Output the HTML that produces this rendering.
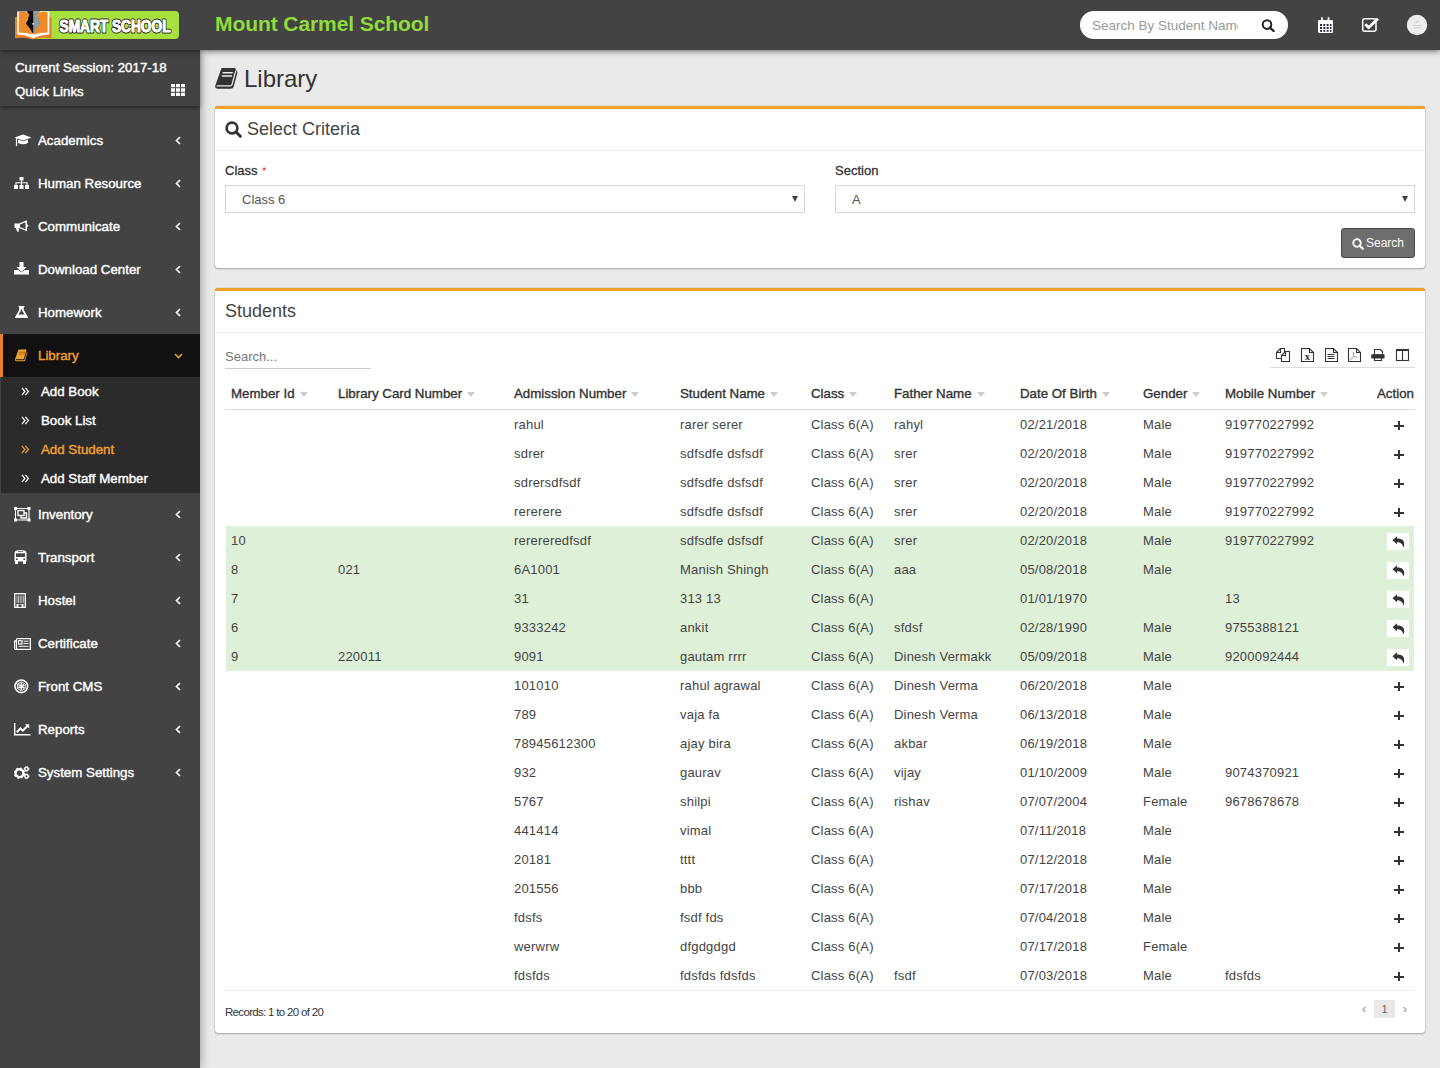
<!DOCTYPE html>
<html><head><meta charset="utf-8">
<style>
*{box-sizing:border-box;margin:0;padding:0}
html,body{width:1440px;height:1068px;overflow:hidden}
body{background:#eaeaea;font-family:"Liberation Sans",sans-serif;color:#444;position:relative}
.a{position:absolute}
svg{display:block}
#hdr{left:0;top:0;width:1440px;height:50px;background:#434343;z-index:5;box-shadow:0 1px 6px rgba(0,0,0,.6)}
#side{left:0;top:50px;width:200px;height:1018px;background:#434343;z-index:4;box-shadow:1px 0 9px rgba(0,0,0,.34)}
.school{left:215px;top:9px;font-size:21px;font-weight:bold;color:#90dc3c;letter-spacing:-.08px;line-height:30px}
.srch{left:1080px;top:11px;width:208px;height:28px;border-radius:14px;background:#fff}
.srch span{position:absolute;left:12px;top:1px;line-height:28px;font-size:13.5px;color:#999;white-space:nowrap;width:146px;overflow:hidden}
.sess{left:0;top:0;width:200px;height:56px;box-shadow:0 2px 4px rgba(0,0,0,.35);background:#434343;z-index:2}
.sess div{position:absolute;left:15px;color:#fff;font-weight:normal;font-size:13.3px;-webkit-text-stroke:.4px #fff;line-height:16px}
.menu{left:0;top:69px;width:200px}
.mi{position:relative;height:43px;line-height:43px;color:#fff;font-weight:normal;font-size:13.3px;-webkit-text-stroke:.4px currentColor;padding-left:38px}
.mi svg{position:absolute}
.mi .chev{position:absolute;left:175px;top:17px}
.mi.act{background:#111;color:#f0a030;border-left:3px solid #e8802a;padding-left:35px}
.mi.act .chev{left:171px;top:19px}
.sub{background:#2b2b2b;height:116px;margin-left:1px}
.sub div{position:relative;height:29px;line-height:29px;color:#fff;font-weight:normal;font-size:13.3px;-webkit-text-stroke:.4px currentColor;padding-left:40px}
.sub div.on{color:#f0a030}
.sub div svg{position:absolute;left:20px;top:10px}
.title{left:244px;top:63px;font-size:24px;line-height:32px;color:#333}
.box{position:absolute;left:215px;width:1210px;background:#fff;border-top:3px solid #f4a128;border-radius:3px;box-shadow:0 1px 2px rgba(0,0,0,.28),0 0 1px rgba(0,0,0,.4)}
.bh{position:absolute;left:0;top:0;width:100%;height:42px;border-bottom:1px solid #f0f0f0}
.bh .t{position:absolute;top:6px;font-size:18px;line-height:28px;color:#444}
.lbl{position:absolute;font-size:13px;font-weight:normal;-webkit-text-stroke:.3px #333;color:#333;line-height:16px}
.sel{position:absolute;height:28px;border:1px solid #d2d6de;background:#fff;font-size:13px;color:#555;line-height:27px;padding-left:16px}
.sel:after{content:"";position:absolute;right:6px;top:10px;border-left:3px solid transparent;border-right:3px solid transparent;border-top:6px solid #444}
.btn{position:absolute;background:#6e6e6e;border:1px solid #444;border-radius:3px;color:#fff;font-size:12px;line-height:29px}
.th{position:absolute;left:225px;top:379px;width:1190px;height:31px;border-bottom:1px solid #ddd}
.th span{position:absolute;top:0;line-height:29px;font-size:13.3px;font-weight:normal;-webkit-text-stroke:.35px #333;color:#333;white-space:nowrap}
.arr{display:inline-block;width:0;height:0;border-left:4px solid transparent;border-right:4px solid transparent;border-top:5px solid #ccc;margin-left:5px;vertical-align:1px;-webkit-text-stroke:0}
.tb{position:absolute;left:226px;top:410px;width:1189px;height:580px}
.row{position:absolute;left:0;width:1188px;height:29px}
.row.g{background:#dff0d8}
.row span{position:absolute;top:0;line-height:29px;font-size:13px;color:#444;white-space:nowrap;letter-spacing:.2px}
.pl{position:absolute;left:1168px;top:11px;width:10px;height:9px}
.pl:before{content:"";position:absolute;left:4px;top:0;width:2px;height:9px;background:#333}
.pl:after{content:"";position:absolute;left:0;top:3.5px;width:10px;height:2px;background:#333}
.rb{position:absolute;left:1161px;top:7px;width:22px;height:17px;background:#fff}
.rb svg{position:absolute;left:5px;top:3px}
.tool svg{position:absolute;top:348px}
</style></head>
<body>
<svg width="0" height="0" style="position:absolute">
 <defs>
  <symbol id="reply" viewBox="0 0 13 12"><path d="M0.5 4.2 L5 0.3 V2.6 C9.5 2.6 12.2 4.3 12.2 8.2 C12.2 9.6 11.7 10.8 11 11.6 C11.3 8.8 9.3 6.2 5 6.2 V8.3 Z" fill="#333"/></symbol>
  <symbol id="chl" viewBox="0 0 6 9"><path d="M5 1 L1.5 4.5 L5 8" fill="none" stroke="#fff" stroke-width="1.7"/></symbol>
  <symbol id="dbl" viewBox="0 0 9 9"><path d="M0.9 0.9 L3.9 4.5 L0.9 8.1 M4.4 0.9 L7.4 4.5 L4.4 8.1" fill="none" stroke="currentColor" stroke-width="1.25"/></symbol>
 </defs>
</svg>
<div id="hdr" class="a">
  <svg class="a" style="left:14px;top:10px" width="166" height="31" viewBox="0 0 166 31">
    <rect x="18" y="1" width="147" height="28" rx="4" fill="#a8e040"/>
    <path d="M1 7.6 Q1 6.9 2 6.9 H36.6 Q37.6 6.9 37.6 7.6 V28.3 Q28 27 19.2 29.4 Q10.4 27 1 28.3 Z" fill="#eb7f22"/>
    <path d="M3.2 1.5 H35.3 V24.4 Q27 24.6 19.2 28.2 Q11.4 24.6 3.2 24.4 Z" fill="#fff"/>
    <path d="M13.3 1 H25.3 L24.6 9.5 L27 13.5 L19.2 24 L11.4 13.5 L13.9 9.5 Z" fill="#0e0e0e"/>
    <path d="M19.2 1 H25.3 L24.6 9.5 L27 13.5 L19.2 24 Z" fill="#8e9ba0"/>
    <circle cx="19.2" cy="13.8" r="0.9" fill="#fff"/>
    <path d="M4.8 2.2 Q11 1 15.6 4.2 Q14 9 11.8 13.4 Q16.5 18 18.9 24.6 Q12 22.6 4.8 22.6 Z" fill="#ef8a28"/>
    <path d="M33.6 2.2 Q27.4 1 22.8 4.2 Q24.4 9 26.6 13.4 Q21.9 18 19.5 24.6 Q26.4 22.6 33.6 22.6 Z" fill="#ef8a28"/>
    <text x="45.5" y="21.8" font-family="Liberation Sans" font-weight="bold" font-size="17" textLength="111" lengthAdjust="spacingAndGlyphs" fill="#fff" stroke="#262626" stroke-width="3" stroke-linejoin="round" paint-order="stroke">SMART SCHOOL</text><text x="45.5" y="21.8" font-family="Liberation Sans" font-weight="bold" font-size="17" textLength="111" lengthAdjust="spacingAndGlyphs" fill="#fff" stroke="#fff" stroke-width="1">SMART SCHOOL</text>
  </svg>
  <div class="a school">Mount Carmel School</div>
  <div class="a srch"><span>Search By Student Name</span>
    <svg class="a" style="left:181px;top:8px" width="15" height="13" viewBox="0 0 15 13"><circle cx="6" cy="5.6" r="4.3" fill="none" stroke="#222" stroke-width="2"/><path d="M9 8.6 L12.6 12" stroke="#222" stroke-width="2.4" stroke-linecap="round"/></svg>
  </div>
  <svg class="a" style="left:1317px;top:17px" width="17" height="17" viewBox="0 0 17 17"><rect x="1" y="3" width="15" height="13" rx="1.2" fill="#fff"/><path d="M5 1 V4.5 M11.5 1 V4.5" stroke="#fff" stroke-width="1.8" stroke-linecap="round"/><path d="M3 7h2v2H3zM6.3 7h2v2h-2zM9.6 7h2v2h-2zM12.9 7h1.6v2h-1.6zM3 10h2v2H3zM6.3 10h2v2h-2zM9.6 10h2v2h-2zM12.9 10h1.6v2h-1.6zM3 13h2v1.7H3zM6.3 13h2v1.7h-2zM9.6 13h2v1.7h-2zM12.9 13h1.6v1.7h-1.6z" fill="#2a2a40"/></svg>
  <svg class="a" style="left:1361px;top:17px" width="19" height="16" viewBox="0 0 19 16"><rect x="1.7" y="1.7" width="13.3" height="12.6" rx="2" fill="none" stroke="#fff" stroke-width="1.5"/><path d="M4.3 7.3 L7.6 10.6 L17 1.8" fill="none" stroke="#fff" stroke-width="2.8"/></svg>
  <svg class="a" style="left:1406px;top:14px" width="22" height="22" viewBox="0 0 22 22"><circle cx="11" cy="11" r="10.2" fill="#ededed"/><path d="M8.5 8.5 Q11 5.5 13.5 8.5 Z" fill="#c8c8c8"/><path d="M6.5 11.5 H15.5 M8 13.5 H14" stroke="#d0d0d0" stroke-width="0.9"/></svg>
</div>
<div id="side" class="a">
  <div class="a sess"><div style="top:10px">Current Session: 2017-18</div><div style="top:34px">Quick Links</div>
    <svg class="a" style="left:171px;top:34px" width="14" height="12" viewBox="0 0 14 12"><path d="M0 0h4v3.3H0zM5 0h4v3.3H5zM10 0h4v3.3h-4zM0 4.3h4v3.4H0zM5 4.3h4v3.4H5zM10 4.3h4v3.4h-4zM0 8.7h4V12H0zM5 8.7h4V12H5zM10 8.7h4V12h-4z" fill="#fff"/></svg>
  </div>
  <div class="a menu">
    <div class="mi"><svg style="left:14px;top:15px" width="18" height="13" viewBox="0 0 18 13"><path d="M9 0.5 L17.5 3.5 L9 6.5 L0.5 3.5 Z" fill="#fff"/><path d="M4 5.5 V9 Q9 11.5 14 9 V5.5 L9 7.3 Z" fill="#fff"/><path d="M2.5 4 V12" stroke="#fff" stroke-width="1.2"/></svg>Academics<svg class="chev" width="6" height="9"><use href="#chl"/></svg></div>
    <div class="mi"><svg style="left:14px;top:15px" width="15" height="12" viewBox="0 0 15 12"><path d="M5.5 0h4v3.5h-4zM0 8h4v4H0zM5.5 8h4v4h-4zM11 8h4v4h-4z" fill="#fff"/><path d="M7.5 3.5V8M2 8V5.8H13V8" fill="none" stroke="#fff" stroke-width="1.1"/></svg>Human Resource<svg class="chev" width="6" height="9"><use href="#chl"/></svg></div>
    <div class="mi"><svg style="left:14px;top:15px" width="15" height="12" viewBox="0 0 15 12"><path d="M0.5 3.5 H5 L13 0.3 V11.2 L5 8 H0.5 Z" fill="#fff"/><path d="M6 4.5 L11.5 2.3 V9.2 L6 7 Z" fill="#434343"/><path d="M2 8 L3 11.5 H5 L4.6 8 Z" fill="#fff"/><path d="M13 4 L14.5 5.7 L13 7.5" fill="#fff"/></svg>Communicate<svg class="chev" width="6" height="9"><use href="#chl"/></svg></div>
    <div class="mi"><svg style="left:14px;top:14px" width="15" height="13" viewBox="0 0 15 13"><path d="M5.5 0h4v5h3l-5 5-5-5h3z" fill="#fff"/><path d="M0 8h4.5l3 2.5 3-2.5H15v4.5H0z" fill="#fff"/></svg>Download Center<svg class="chev" width="6" height="9"><use href="#chl"/></svg></div>
    <div class="mi"><svg style="left:15px;top:15px" width="13" height="12" viewBox="0 0 13 12"><path d="M3.5 0.5h6M4.8 0.5v3.5L0.5 11.5h12L8.2 4V0.5" fill="#fff" stroke="#fff" stroke-width="1.1"/><path d="M5.8 3.5 L5.8 5 L3.3 8.5 H9.7 L7.2 5 V3.5 Z" fill="#434343"/></svg>Homework<svg class="chev" width="6" height="9"><use href="#chl"/></svg></div>
    <div class="mi act"><svg style="left:11px;top:15px" width="14" height="13" viewBox="0 0 24 23"><path d="M7.6 1 H20.6 Q22 1 21.7 2.5 L22.9 4.3 Q23.6 5 23.3 6.3 L19.7 19.5 Q19.1 21.8 16.7 21.8 H4 Q0.7 21.8 1.3 18.6 Z" fill="#f0a030"/><path d="M2.6 18.9 H16.4 Q17.6 18.9 18 17.6 L21.9 3.4" fill="none" stroke="#111" stroke-width="1.8"/><path d="M8.6 5.8 H18.8 M7.8 9 H18" stroke="#c07818" stroke-width="2.2"/></svg>Library<svg class="chev" width="9" height="6" viewBox="0 0 9 6"><path d="M1 1 L4.5 4.5 L8 1" fill="none" stroke="#f0a030" stroke-width="1.6"/></svg></div>
    <div class="sub"><div><svg width="9" height="9" style="color:#fff"><use href="#dbl"/></svg>Add Book</div><div><svg width="9" height="9" style="color:#fff"><use href="#dbl"/></svg>Book List</div><div class="on"><svg width="9" height="9" style="color:#f0a030"><use href="#dbl"/></svg>Add Student</div><div><svg width="9" height="9" style="color:#fff"><use href="#dbl"/></svg>Add Staff Member</div></div>
    <div class="mi"><svg style="left:14px;top:14px" width="17" height="15" viewBox="0 0 17 15"><path d="M2.5 1.5 H14 M2.5 13 H14 M1.5 2.5 V12 M15 2.5 V12" stroke="#fff" stroke-width="1.1"/><path d="M0 0h3v3H0zM13.5 0h3v3h-3zM0 11.5h3v3H0zM13.5 11.5h3v3h-3z" fill="#fff"/><rect x="4" y="3.5" width="6" height="5" fill="none" stroke="#fff" stroke-width="1.3"/><path d="M10 6 H12.5 V11 H7 V8.5" fill="none" stroke="#fff" stroke-width="1.3"/></svg>Inventory<svg class="chev" width="6" height="9"><use href="#chl"/></svg></div>
    <div class="mi"><svg style="left:14px;top:14px" width="13" height="14" viewBox="0 0 13 14"><path d="M2.5 0.5 Q6.5 -0.3 10.5 0.5 Q12.5 1.2 12.5 3.5 V11.5 H0.5 V3.5 Q0.5 1.2 2.5 0.5 Z" fill="#fff"/><path d="M2 3.3h9v3.7H2z" fill="#434343"/><path d="M4 1.5h5" stroke="#434343" stroke-width="0.7"/><circle cx="2.8" cy="9.2" r="0.9" fill="#434343"/><circle cx="10.2" cy="9.2" r="0.9" fill="#434343"/><path d="M1 11h3v3H1zM9 11h3v3H9z" fill="#fff"/></svg>Transport<svg class="chev" width="6" height="9"><use href="#chl"/></svg></div>
    <div class="mi"><svg style="left:14px;top:14px" width="12" height="15" viewBox="0 0 12 15"><rect x="0.7" y="0.7" width="10.6" height="13.6" fill="none" stroke="#fff" stroke-width="1.3"/><path d="M3 2.5V10M4.6 2.5V10M6.2 2.5V10M7.8 2.5V10M9.4 2.5V10" stroke="#ddd" stroke-width="0.8"/><path d="M2.5 11h7v3h-7z" fill="#fff"/><path d="M4.5 11.5h3v2.5h-3z" fill="#434343"/></svg>Hostel<svg class="chev" width="6" height="9"><use href="#chl"/></svg></div>
    <div class="mi"><svg style="left:14px;top:16px" width="17" height="12" viewBox="0 0 17 12"><path d="M2.5 0.7 H16.3 V11.3 H1.5 Q0.7 11.3 0.7 10.5 V3 H2.5" fill="none" stroke="#fff" stroke-width="1.3"/><path d="M2.5 1 V11" stroke="#fff" stroke-width="1"/><rect x="4.5" y="2.7" width="3.5" height="3.3" fill="none" stroke="#fff" stroke-width="1.2"/><path d="M9.5 3.2H14.5M9.5 5.5H14.5M4.5 8.3H14.5" stroke="#fff" stroke-width="1"/></svg>Certificate<svg class="chev" width="6" height="9"><use href="#chl"/></svg></div>
    <div class="mi"><svg style="left:14px;top:14px" width="15" height="15" viewBox="0 0 15 15"><circle cx="7.3" cy="7.3" r="6.3" fill="none" stroke="#fff" stroke-width="1.6"/><path d="M7.3 2.8 L11.2 5 V9.6 L7.3 11.8 L3.4 9.6 V5 Z" fill="none" stroke="#fff" stroke-width="0.9"/><path d="M7.3 3.8V10.8M4.3 5.6L10.3 9M4.3 9L10.3 5.6" stroke="#fff" stroke-width="1.6"/></svg>Front CMS<svg class="chev" width="6" height="9"><use href="#chl"/></svg></div>
    <div class="mi"><svg style="left:14px;top:15px" width="17" height="13" viewBox="0 0 17 13"><path d="M0.7 0 V11.7 H16.5" fill="none" stroke="#fff" stroke-width="1.4"/><path d="M2.8 9.2 L6.4 5.4 L8.8 7.6 L13.4 3" fill="none" stroke="#fff" stroke-width="2"/><path d="M11 1.3 H15.2 V5.5 Z" fill="#fff"/></svg>Reports<svg class="chev" width="6" height="9"><use href="#chl"/></svg></div>
    <div class="mi"><svg style="left:14px;top:15px" width="16" height="14" viewBox="0 0 16 14"><circle cx="5.4" cy="7.2" r="3.9" fill="none" stroke="#fff" stroke-width="2.4"/><circle cx="5.4" cy="7.2" r="4.9" fill="none" stroke="#fff" stroke-width="1.6" stroke-dasharray="1.9 1.95"/><circle cx="12.5" cy="3" r="1.7" fill="none" stroke="#fff" stroke-width="1.5"/><circle cx="12.5" cy="3" r="2.4" fill="none" stroke="#fff" stroke-width="1" stroke-dasharray="1 1.1"/><circle cx="12.5" cy="10.3" r="1.7" fill="none" stroke="#fff" stroke-width="1.5"/><circle cx="12.5" cy="10.3" r="2.4" fill="none" stroke="#fff" stroke-width="1" stroke-dasharray="1 1.1"/></svg>System Settings<svg class="chev" width="6" height="9"><use href="#chl"/></svg></div>
  </div>
</div>
<div class="a title">Library</div>
<svg class="a" style="left:214px;top:67px" width="24" height="23" viewBox="0 0 24 23"><path d="M7.6 1 H20.6 Q22 1 21.7 2.5 L22.9 4.3 Q23.6 5 23.3 6.3 L19.7 19.5 Q19.1 21.8 16.7 21.8 H4 Q0.7 21.8 1.3 18.6 Z" fill="#333"/><path d="M2.6 18.9 H16.4 Q17.6 18.9 18 17.6 L21.9 3.4" fill="none" stroke="#eaeaea" stroke-width="1.3"/><path d="M8.6 5.8 H18.8 M7.8 9 H18" stroke="#eaeaea" stroke-width="1.4"/></svg>
<div class="box" style="top:106px;height:162px">
  <div class="bh"><div class="t" style="left:32px">Select Criteria</div>
  <svg class="a" style="left:10px;top:12px" width="17" height="17" viewBox="0 0 17 17"><circle cx="7" cy="7" r="5.4" fill="none" stroke="#333" stroke-width="2.6"/><path d="M10.8 10.8 L15.3 15.3" stroke="#333" stroke-width="3" stroke-linecap="round"/></svg>
  </div>
</div>
<div class="lbl" style="left:225px;top:163px">Class <span style="color:#e23;font-size:10px;font-weight:normal;-webkit-text-stroke:0;vertical-align:0;margin-left:1px">*</span></div>
<div class="sel" style="left:225px;top:185px;width:580px">Class 6</div>
<div class="lbl" style="left:835px;top:163px">Section</div>
<div class="sel" style="left:835px;top:185px;width:580px">A</div>
<div class="btn" style="left:1341px;top:228px;width:74px;height:30px;padding-left:24px">Search
  <svg class="a" style="left:10px;top:9px" width="12" height="12" viewBox="0 0 12 12"><circle cx="5" cy="5" r="3.8" fill="none" stroke="#fff" stroke-width="1.8"/><path d="M7.7 7.7 L10.8 10.8" stroke="#fff" stroke-width="2.2" stroke-linecap="round"/></svg>
</div>
<div class="box" style="top:288px;height:745px">
  <div class="bh"><div class="t" style="left:10px">Students</div></div>
</div>
<div class="a" style="left:225px;top:348px;font-size:13px;color:#777;line-height:18px">Search...</div>
<div class="a" style="left:225px;top:368px;width:146px;height:1px;background:#ccc"></div>
<div class="a" style="left:1270px;top:367px;width:145px;height:1px;background:#ddd"></div>
<svg class="a" style="left:1270px;top:344px" width="145" height="22" viewBox="0 0 145 22" shape-rendering="auto">
 <g fill="#fff" stroke="#333" stroke-width="1.1" stroke-linejoin="miter">
  <path d="M6.5 8.5 L10.5 4.5 H14.5 V14.5 H6.5 Z"/><path d="M6.5 8.5 H10.5 V4.5" fill="none"/>
  <path d="M11.5 11.5 L15.5 7.5 H19.5 V17.5 H11.5 Z"/><path d="M11.5 11.5 H15.5 V7.5" fill="none"/>
  <path d="M31.5 4.5 H39.5 L43.5 8.5 V17.5 H31.5 Z"/><path d="M39.5 4.5 V8.5 H43.5" fill="none"/>
  <path d="M55.5 4.5 H63.5 L67.5 8.5 V17.5 H55.5 Z"/><path d="M63.5 4.5 V8.5 H67.5" fill="none"/>
  <path d="M57.5 10.5 H64.5 M57.5 12.5 H64.5 M57.5 14.5 H64.5" fill="none"/>
  <path d="M78.5 4.5 H86.5 L90.5 8.5 V17.5 H78.5 Z"/><path d="M86.5 4.5 V8.5 H90.5" fill="none"/>
  <path d="M104.5 5.5 H110.5 L112.5 7.5 V11 H104.5 Z"/>
  <path d="M104.5 14 V16.5 H111.5 V14" />
  <rect x="126.5" y="5.5" width="12" height="11" fill="#fff"/>
 </g>
 <text x="37.4" y="16" font-family="Liberation Serif" font-weight="bold" font-size="10.5" text-anchor="middle" fill="#333">x</text>
 <path d="M83.7 12.4 L83.5 8 M83.7 12.4 L80 15.8 M83.7 12.4 L87.6 13.4" stroke="#907890" stroke-width="0.8" fill="none"/>
 <rect x="101.2" y="10.2" width="13.4" height="4.4" rx="0.8" fill="#333"/>
 <rect x="126" y="5" width="13" height="2" fill="#333"/>
 <path d="M132.5 6 V16.5" stroke="#333" stroke-width="1.1"/>
</svg>
<div class="th">
 <span style="left:6px">Member Id<i class="arr"></i></span>
 <span style="left:113px">Library Card Number<i class="arr"></i></span>
 <span style="left:289px">Admission Number<i class="arr"></i></span>
 <span style="left:455px">Student Name<i class="arr"></i></span>
 <span style="left:586px">Class<i class="arr"></i></span>
 <span style="left:669px">Father Name<i class="arr"></i></span>
 <span style="left:795px">Date Of Birth<i class="arr"></i></span>
 <span style="left:918px">Gender<i class="arr"></i></span>
 <span style="left:1000px">Mobile Number<i class="arr"></i></span>
 <span style="left:1152px">Action</span>
</div>
<div class="tb">
<div class="row" style="top:0px"><span style="left:288px">rahul</span><span style="left:454px">rarer serer</span><span style="left:585px">Class 6(A)</span><span style="left:668px">rahyl</span><span style="left:794px">02/21/2018</span><span style="left:917px">Male</span><span style="left:999px">919770227992</span><i class="pl"></i></div>
<div class="row" style="top:29px"><span style="left:288px">sdrer</span><span style="left:454px">sdfsdfe dsfsdf</span><span style="left:585px">Class 6(A)</span><span style="left:668px">srer</span><span style="left:794px">02/20/2018</span><span style="left:917px">Male</span><span style="left:999px">919770227992</span><i class="pl"></i></div>
<div class="row" style="top:58px"><span style="left:288px">sdrersdfsdf</span><span style="left:454px">sdfsdfe dsfsdf</span><span style="left:585px">Class 6(A)</span><span style="left:668px">srer</span><span style="left:794px">02/20/2018</span><span style="left:917px">Male</span><span style="left:999px">919770227992</span><i class="pl"></i></div>
<div class="row" style="top:87px"><span style="left:288px">rererere</span><span style="left:454px">sdfsdfe dsfsdf</span><span style="left:585px">Class 6(A)</span><span style="left:668px">srer</span><span style="left:794px">02/20/2018</span><span style="left:917px">Male</span><span style="left:999px">919770227992</span><i class="pl"></i></div>
<div class="row g" style="top:116px"><span style="left:5px">10</span><span style="left:288px">rerereredfsdf</span><span style="left:454px">sdfsdfe dsfsdf</span><span style="left:585px">Class 6(A)</span><span style="left:668px">srer</span><span style="left:794px">02/20/2018</span><span style="left:917px">Male</span><span style="left:999px">919770227992</span><i class="rb"><svg width="13" height="12" viewBox="0 0 13 12"><use href="#reply"/></svg></i></div>
<div class="row g" style="top:145px"><span style="left:5px">8</span><span style="left:112px">021</span><span style="left:288px">6A1001</span><span style="left:454px">Manish Shingh</span><span style="left:585px">Class 6(A)</span><span style="left:668px">aaa</span><span style="left:794px">05/08/2018</span><span style="left:917px">Male</span><i class="rb"><svg width="13" height="12" viewBox="0 0 13 12"><use href="#reply"/></svg></i></div>
<div class="row g" style="top:174px"><span style="left:5px">7</span><span style="left:288px">31</span><span style="left:454px">313 13</span><span style="left:585px">Class 6(A)</span><span style="left:794px">01/01/1970</span><span style="left:999px">13</span><i class="rb"><svg width="13" height="12" viewBox="0 0 13 12"><use href="#reply"/></svg></i></div>
<div class="row g" style="top:203px"><span style="left:5px">6</span><span style="left:288px">9333242</span><span style="left:454px">ankit</span><span style="left:585px">Class 6(A)</span><span style="left:668px">sfdsf</span><span style="left:794px">02/28/1990</span><span style="left:917px">Male</span><span style="left:999px">9755388121</span><i class="rb"><svg width="13" height="12" viewBox="0 0 13 12"><use href="#reply"/></svg></i></div>
<div class="row g" style="top:232px"><span style="left:5px">9</span><span style="left:112px">220011</span><span style="left:288px">9091</span><span style="left:454px">gautam rrrr</span><span style="left:585px">Class 6(A)</span><span style="left:668px">Dinesh Vermakk</span><span style="left:794px">05/09/2018</span><span style="left:917px">Male</span><span style="left:999px">9200092444</span><i class="rb"><svg width="13" height="12" viewBox="0 0 13 12"><use href="#reply"/></svg></i></div>
<div class="row" style="top:261px"><span style="left:288px">101010</span><span style="left:454px">rahul agrawal</span><span style="left:585px">Class 6(A)</span><span style="left:668px">Dinesh Verma</span><span style="left:794px">06/20/2018</span><span style="left:917px">Male</span><i class="pl"></i></div>
<div class="row" style="top:290px"><span style="left:288px">789</span><span style="left:454px">vaja fa</span><span style="left:585px">Class 6(A)</span><span style="left:668px">Dinesh Verma</span><span style="left:794px">06/13/2018</span><span style="left:917px">Male</span><i class="pl"></i></div>
<div class="row" style="top:319px"><span style="left:288px">78945612300</span><span style="left:454px">ajay bira</span><span style="left:585px">Class 6(A)</span><span style="left:668px">akbar</span><span style="left:794px">06/19/2018</span><span style="left:917px">Male</span><i class="pl"></i></div>
<div class="row" style="top:348px"><span style="left:288px">932</span><span style="left:454px">gaurav</span><span style="left:585px">Class 6(A)</span><span style="left:668px">vijay</span><span style="left:794px">01/10/2009</span><span style="left:917px">Male</span><span style="left:999px">9074370921</span><i class="pl"></i></div>
<div class="row" style="top:377px"><span style="left:288px">5767</span><span style="left:454px">shilpi</span><span style="left:585px">Class 6(A)</span><span style="left:668px">rishav</span><span style="left:794px">07/07/2004</span><span style="left:917px">Female</span><span style="left:999px">9678678678</span><i class="pl"></i></div>
<div class="row" style="top:406px"><span style="left:288px">441414</span><span style="left:454px">vimal</span><span style="left:585px">Class 6(A)</span><span style="left:794px">07/11/2018</span><span style="left:917px">Male</span><i class="pl"></i></div>
<div class="row" style="top:435px"><span style="left:288px">20181</span><span style="left:454px">tttt</span><span style="left:585px">Class 6(A)</span><span style="left:794px">07/12/2018</span><span style="left:917px">Male</span><i class="pl"></i></div>
<div class="row" style="top:464px"><span style="left:288px">201556</span><span style="left:454px">bbb</span><span style="left:585px">Class 6(A)</span><span style="left:794px">07/17/2018</span><span style="left:917px">Male</span><i class="pl"></i></div>
<div class="row" style="top:493px"><span style="left:288px">fdsfs</span><span style="left:454px">fsdf fds</span><span style="left:585px">Class 6(A)</span><span style="left:794px">07/04/2018</span><span style="left:917px">Male</span><i class="pl"></i></div>
<div class="row" style="top:522px"><span style="left:288px">werwrw</span><span style="left:454px">dfgdgdgd</span><span style="left:585px">Class 6(A)</span><span style="left:794px">07/17/2018</span><span style="left:917px">Female</span><i class="pl"></i></div>
<div class="row" style="top:551px"><span style="left:288px">fdsfds</span><span style="left:454px">fdsfds fdsfds</span><span style="left:585px">Class 6(A)</span><span style="left:668px">fsdf</span><span style="left:794px">07/03/2018</span><span style="left:917px">Male</span><span style="left:999px">fdsfds</span><i class="pl"></i></div></div>
<div class="a" style="left:225px;top:990px;width:1190px;height:1px;background:#eee"></div>
<div class="a" style="left:225px;top:1004px;font-size:11.5px;letter-spacing:-0.68px;color:#333;line-height:16px">Records: 1 to 20 of 20</div>
<div class="a" style="left:1362px;top:1003px;font-size:12px;color:#888;line-height:12px">&#8249;</div>
<div class="a" style="left:1374px;top:1000px;width:21px;height:18px;background:#e8e8e8;font-size:11px;color:#666;line-height:18px;text-align:center">1</div>
<div class="a" style="left:1403px;top:1003px;font-size:12px;color:#888;line-height:12px">&#8250;</div>
</body></html>
